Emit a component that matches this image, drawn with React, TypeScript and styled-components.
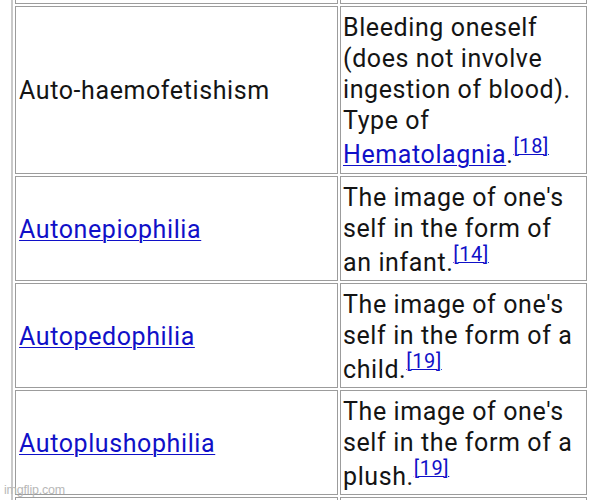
import React from "react";
import styled, { createGlobalStyle } from "styled-components";

const Global = createGlobalStyle`
  html, body { margin: 0; padding: 0; background: #ffffff; }
  body { font-family: Roboto, "Noto Sans", "Liberation Sans", sans-serif; color: #111111; }
`;

const Viewport = styled.div`
  position: relative;
  width: 590px;
  height: 500px;
  overflow: hidden;
  background: #ffffff;
`;

const Table = styled.table`
  margin: -40px 0 0 11px;
  border-collapse: separate;
  border-spacing: 2px;
  border: 2px solid #c9c9c9;
  border-right: none;
  font-size: 25px;
  line-height: 31px;
  letter-spacing: 0.6px;
`;

const Row = styled.tr<{ $h: number }>`
  height: ${(p) => p.$h}px;
`;

const Cell = styled.td<{ $w: number }>`
  box-sizing: border-box;
  width: ${(p) => p.$w}px;
  border: 1px solid #9c9c9c;
  padding: 3px 3px 1px 2px;
  vertical-align: middle;
  color: #141414;
`;

const TermCell = styled(Cell)`
  padding-left: 3px;
  padding-top: 2px;
`;

const Link = styled.a`
  color: #1010c8;
  text-decoration: underline;
  text-decoration-thickness: 1px;
  text-underline-offset: 2px;
`;

const Ref = styled.sup`
  font-size: 20px;
  line-height: 1;
  vertical-align: 10px;
  letter-spacing: 0.6px;
  color: #1010c8;
  text-decoration: underline;
  text-decoration-thickness: 1px;
`;

const Watermark = styled.div`
  position: absolute;
  left: 4px;
  bottom: 3px;
  font-family: "Liberation Sans", Arial, sans-serif;
  font-size: 12.5px;
  color: #b8b8b8;
  letter-spacing: -0.2px;
`;

type Item = { term: string; link: boolean; h: number; desc: React.ReactNode };

const items: Item[] = [
  {
    term: "Auto-haemofetishism",
    link: false,
    h: 168,
    desc: (
      <>
        Bleeding oneself (does not involve ingestion of blood). Type of{" "}
        <Link>Hematolagnia</Link>.<Ref>[18]</Ref>
      </>
    ),
  },
  {
    term: "Autonepiophilia",
    link: true,
    h: 105,
    desc: (
      <>
        The image of one's self in the form of an infant.<Ref>[14]</Ref>
      </>
    ),
  },
  {
    term: "Autopedophilia",
    link: true,
    h: 105,
    desc: (
      <>
        The image of one's self in the form of a child.<Ref>[19]</Ref>
      </>
    ),
  },
  {
    term: "Autoplushophilia",
    link: true,
    h: 105,
    desc: (
      <>
        The image of one's self in the form of a plush.<Ref>[19]</Ref>
      </>
    ),
  },
];

export default function App() {
  return (
    <>
      <Global />
      <Viewport>
        <Table>
          <tbody>
            <Row $h={40}>
              <TermCell $w={323}>&nbsp;</TermCell>
              <Cell $w={247}>&nbsp;</Cell>
            </Row>
            {items.map((it) => (
              <Row key={it.term} $h={it.h}>
                <TermCell $w={323}>{it.link ? <Link>{it.term}</Link> : it.term}</TermCell>
                <Cell $w={247}>{it.desc}</Cell>
              </Row>
            ))}
            <Row $h={105}>
              <TermCell $w={323}>&nbsp;</TermCell>
              <Cell $w={247}>&nbsp;</Cell>
            </Row>
          </tbody>
        </Table>
        <Watermark>imgflip.com</Watermark>
      </Viewport>
    </>
  );
}
